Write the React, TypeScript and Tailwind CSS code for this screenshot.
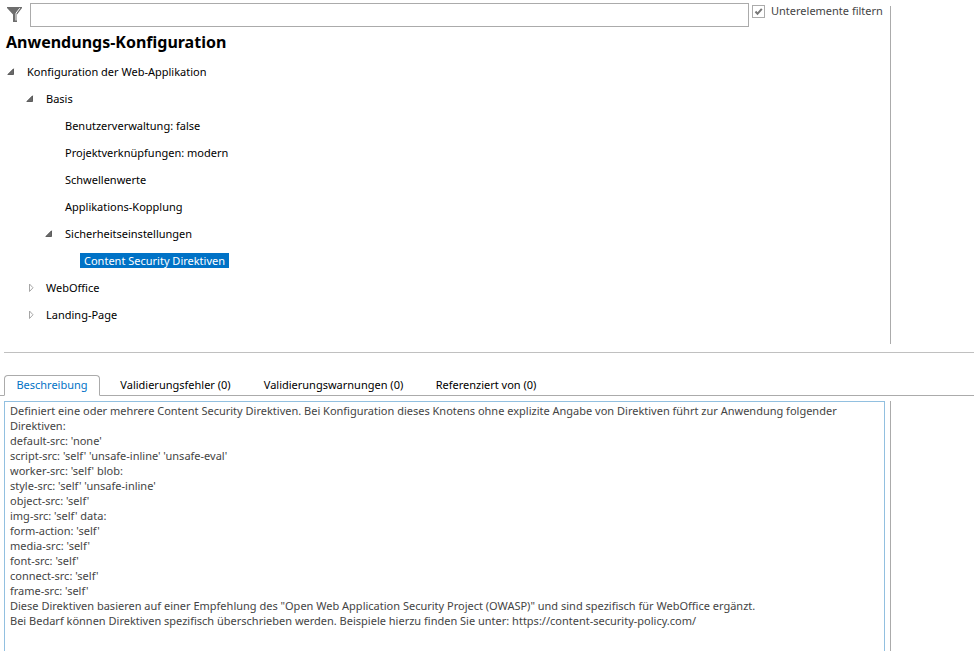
import { useState } from 'react';

type TreeNode = {
  label: string;
  level: number;
  state?: 'open' | 'closed';
  selected?: boolean;
};

const nodes: TreeNode[] = [
  { label: 'Konfiguration der Web-Applikation', level: 0, state: 'open' },
  { label: 'Basis', level: 1, state: 'open' },
  { label: 'Benutzerverwaltung: false', level: 2 },
  { label: 'Projektverknüpfungen: modern', level: 2 },
  { label: 'Schwellenwerte', level: 2 },
  { label: 'Applikations-Kopplung', level: 2 },
  { label: 'Sicherheitseinstellungen', level: 2, state: 'open' },
  { label: 'Content Security Direktiven', level: 3, selected: true },
  { label: 'WebOffice', level: 1, state: 'closed' },
  { label: 'Landing-Page', level: 1, state: 'closed' },
];

const indent = ['pl-[5px]', 'pl-6', 'pl-[43px]', 'pl-[58px]'];

const tabs = [
  { label: 'Beschreibung', width: 'w-24' },
  { label: 'Validierungsfehler (0)', width: 'w-[151px]' },
  { label: 'Validierungswarnungen (0)', width: 'w-[165px]' },
  { label: 'Referenziert von (0)', width: 'w-[140px]' },
];

const description = `Definiert eine oder mehrere Content Security Direktiven. Bei Konfiguration dieses Knotens ohne explizite Angabe von Direktiven führt zur Anwendung folgender Direktiven:
default-src: 'none'
script-src: 'self' 'unsafe-inline' 'unsafe-eval'
worker-src: 'self' blob:
style-src: 'self' 'unsafe-inline'
object-src: 'self'
img-src: 'self' data:
form-action: 'self'
media-src: 'self'
font-src: 'self'
connect-src: 'self'
frame-src: 'self'
Diese Direktiven basieren auf einer Empfehlung des "Open Web Application Security Project (OWASP)" und sind spezifisch für WebOffice ergänzt.
Bei Bedarf können Direktiven spezifisch überschrieben werden. Beispiele hierzu finden Sie unter: https://content-security-policy.com/`;

function FilterIcon() {
  return (
    <svg width="16" height="16" viewBox="0 0 16 16" aria-hidden="true">
      <path d="M0 0H15V1L10 7.5V15H6V7.5L0 1Z" fill="#6d6d6d" />
      <path d="M12.8 1.2L9 6.2V13.5" fill="none" stroke="#fff" strokeWidth="1" />
    </svg>
  );
}

function Arrow({ state }: { state?: 'open' | 'closed' }) {
  return (
    <svg className="mr-[10px] shrink-0" width="12" height="11" viewBox="0 0 12 11" aria-hidden="true">
      {state === 'open' && <path d="M8.5 2.8V8.5H2.8Z" fill="#6a6a6a" stroke="#484848" strokeWidth="0.8" />}
      {state === 'closed' && <path d="M5.5 2V9.5L9 5.75Z" fill="#fff" stroke="#a6a6a6" />}
    </svg>
  );
}

export default function App() {
  const [checked, setChecked] = useState(true);
  const [filter, setFilter] = useState('');
  const [active, setActive] = useState(0);

  return (
    <div className="flex h-screen flex-col overflow-hidden bg-white font-['Noto_Sans',sans-serif] text-[11px] text-black">
      <div className="flex shrink-0 pr-[83px]">
        <div className="min-w-0 flex-1 pb-4">
          <div className="flex h-7 items-start pt-[3px] pl-[7px]">
            <label htmlFor="filter" className="mt-1 mr-[7px]" aria-label="Filter">
              <FilterIcon />
            </label>
            <input
              id="filter"
              type="text"
              value={filter}
              onChange={(e) => setFilter(e.target.value)}
              className="h-6 min-w-0 flex-1 border border-[#ababab] px-1 outline-none"
            />
            <label className="ml-[3px] flex w-[138px] items-center whitespace-nowrap text-[#444]">
              <span className="relative mr-[6px] flex h-[13px] w-[13px]">
                <input
                  type="checkbox"
                  checked={checked}
                  onChange={(e) => setChecked(e.target.checked)}
                  className="h-[13px] w-[13px] appearance-none border border-[#ababab]"
                />
                {checked && (
                  <svg className="pointer-events-none absolute inset-0" width="13" height="13" viewBox="0 0 13 13">
                    <path d="M3.5 6.5L5.5 8.8L9.8 3.8" fill="none" stroke="#777" strokeWidth="2" />
                  </svg>
                )}
              </span>
              Unterelemente filtern
            </label>
          </div>
          <h1 className="h-[30px] pl-[6px] text-base leading-7 font-bold">Anwendungs-Konfiguration</h1>
          <ul role="tree">
            {nodes.map((n) => (
              <li
                key={n.label}
                role="treeitem"
                aria-selected={!!n.selected}
                className={`flex h-[27px] items-center whitespace-nowrap ${indent[n.level]}`}
              >
                <Arrow state={n.state} />
                <span className={n.selected ? 'bg-[#0072c6] px-1 leading-[15px] text-white' : 'leading-[15px]'}>
                  {n.label}
                </span>
              </li>
            ))}
          </ul>
        </div>
        <div className="mt-[6px] w-px bg-[#ababab]" />
      </div>

      <hr className="mt-2 ml-1 shrink-0 border-[#c0c0c0]" />

      <div role="tablist" className="mt-[22px] flex h-[21px] shrink-0 border-b border-[#ababab] pl-1">
        {tabs.map((t, i) => (
          <button
            key={t.label}
            type="button"
            role="tab"
            aria-selected={i === active}
            onClick={() => setActive(i)}
            className={`h-[21px] whitespace-nowrap ${t.width} ${
              i === active ? 'rounded-t border border-b-white border-[#ababab] bg-white text-[#0072c6]' : ''
            }`}
          >
            {t.label}
          </button>
        ))}
      </div>

      <div className="mt-[5px] flex min-h-0 flex-1 pr-[83px] pl-1">
        <textarea
          readOnly
          aria-label="Beschreibung"
          value={description}
          className="min-w-0 flex-1 resize-none overflow-hidden border border-b-0 border-[#92c0e0] px-[5px] py-px leading-[15px] text-[#444] outline-none"
        />
        <div className="ml-[5px] w-px bg-[#ababab]" />
      </div>
    </div>
  );
}
